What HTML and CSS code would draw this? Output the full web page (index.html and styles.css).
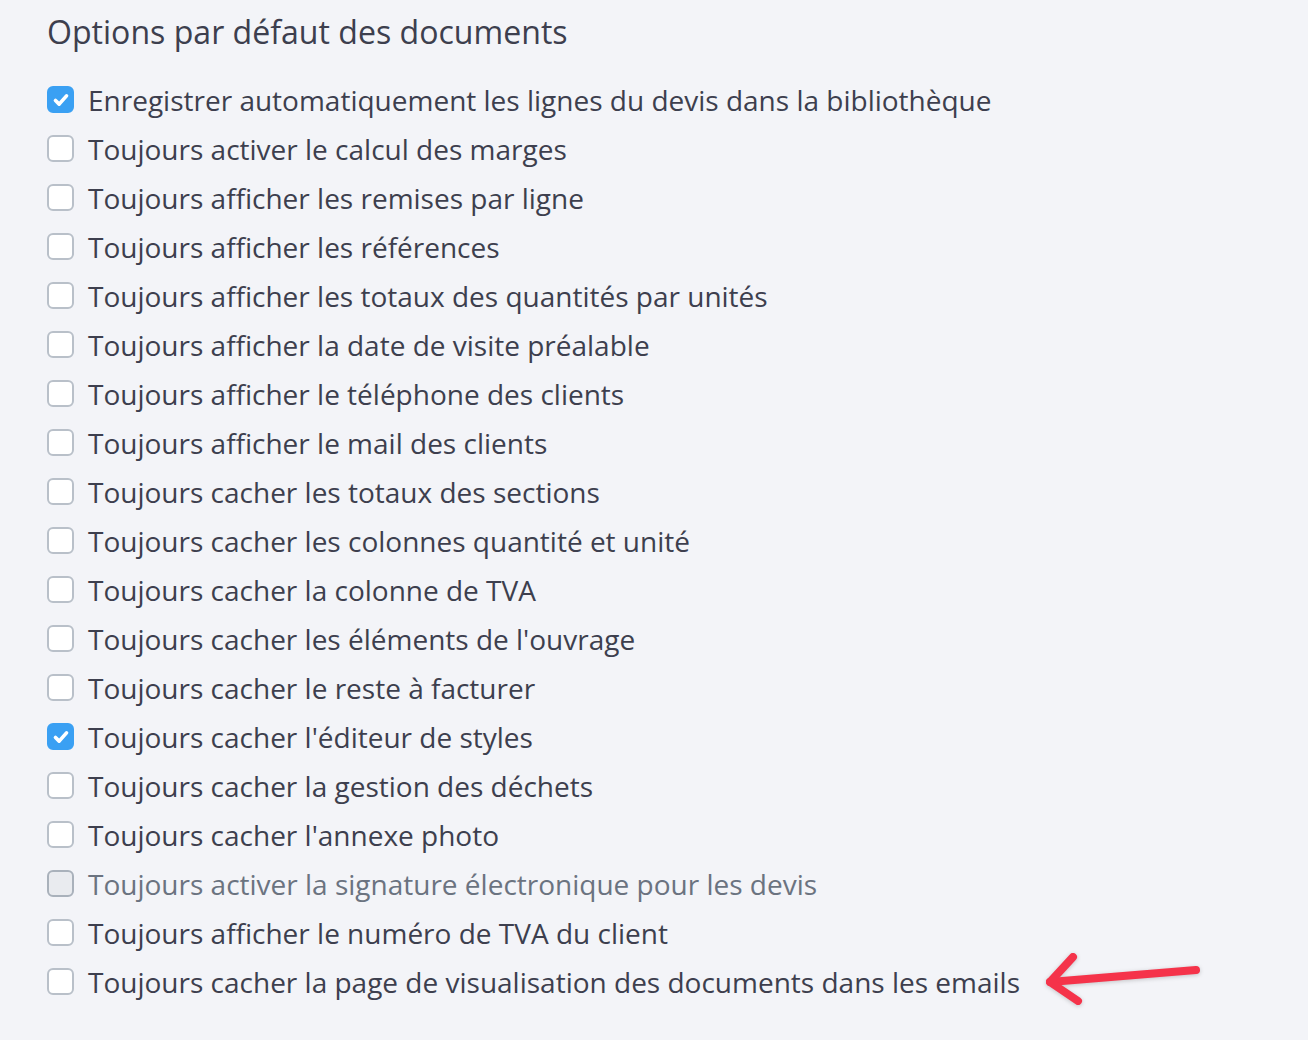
FILE: index.html
```html
<!DOCTYPE html>
<html lang="fr">
<head>
    <meta charset="UTF-8">
    <title>Options par défaut des documents</title>
    <link rel="stylesheet" href="styles.css">
</head>
<body>
    <div class="settings">
        <h2 class="settings-title">Options par défaut des documents</h2>

        <ul class="option-list">
            <li class="option"><span class="box checked"></span>Enregistrer automatiquement les lignes du devis dans la bibliothèque</li>
            <li class="option"><span class="box"></span>Toujours activer le calcul des marges</li>
            <li class="option"><span class="box"></span>Toujours afficher les remises par ligne</li>
            <li class="option"><span class="box"></span>Toujours afficher les références</li>
            <li class="option"><span class="box"></span>Toujours afficher les totaux des quantités par unités</li>
            <li class="option"><span class="box"></span>Toujours afficher la date de visite préalable</li>
            <li class="option"><span class="box"></span>Toujours afficher le téléphone des clients</li>
            <li class="option"><span class="box"></span>Toujours afficher le mail des clients</li>
            <li class="option"><span class="box"></span>Toujours cacher les totaux des sections</li>
            <li class="option"><span class="box"></span>Toujours cacher les colonnes quantité et unité</li>
            <li class="option"><span class="box"></span>Toujours cacher la colonne de TVA</li>
            <li class="option"><span class="box"></span>Toujours cacher les éléments de l'ouvrage</li>
            <li class="option"><span class="box"></span>Toujours cacher le reste à facturer</li>
            <li class="option"><span class="box checked"></span>Toujours cacher l'éditeur de styles</li>
            <li class="option"><span class="box"></span>Toujours cacher la gestion des déchets</li>
            <li class="option"><span class="box"></span>Toujours cacher l'annexe photo</li>
            <li class="option disabled"><span class="box"></span>Toujours activer la signature électronique pour les devis</li>
            <li class="option"><span class="box"></span>Toujours afficher le numéro de TVA du client</li>
            <li class="option">
                <span class="box"></span>Toujours cacher la page de visualisation des documents dans les emails
                <!-- annotation arrow -->
                <svg class="arrow" width="170" height="60" viewBox="0 0 170 60">
                    <g fill="none" stroke="#f5334a" stroke-width="8" stroke-linecap="round" stroke-linejoin="round">
                        <path d="M156 18 L10 30"/>
                        <path d="M33 5 L10 30 L38 49"/>
                    </g>
                </svg>
            </li>
        </ul>
    </div>
</body>
</html>
```

FILE: styles.css
```css
/* General Styling */
body {
    margin: 0;
    background-color: #f3f4f8;
    font-family: "Open Sans", sans-serif;
    color: #3d3f4e;
}

.settings {
    padding: 10px 47px;
}

.settings-title {
    margin: 0 0 21px;
    font-size: 32.1px;
    font-weight: 400;
    line-height: 44px;
    color: #3d3f4e;
}

/* Option list */
.option-list {
    list-style: none;
    margin: 0;
    padding: 0;
}

.option {
    position: relative;
    display: flex;
    align-items: center;
    height: 49px;
    font-size: 28px;
    white-space: nowrap;
}

.box {
    flex: none;
    width: 27px;
    height: 27px;
    margin-right: 14px;
    box-sizing: border-box;
    border: 2px solid #b9c0c9;
    border-radius: 6px;
    background-color: #fff;
}

.box.checked {
    border-color: #3aa0f3;
    background-color: #3aa0f3;
    background-image: url("data:image/svg+xml,%3Csvg xmlns='http://www.w3.org/2000/svg' viewBox='0 0 24 24'%3E%3Cpath d='M6 12.5l4 4 8-9' fill='none' stroke='white' stroke-width='4' stroke-linecap='round' stroke-linejoin='round'/%3E%3C/svg%3E");
    background-size: 22px;
    background-position: center;
    background-repeat: no-repeat;
}

.option.disabled {
    color: #6b7380;
}

.option.disabled .box {
    background-color: #e9ebef;
    border-color: #a9b1bb;
}

/* Annotation */
.arrow {
    position: absolute;
    left: 993px;
    top: -5px;
    filter: drop-shadow(0 1px 2px rgba(0, 0, 0, 0.2));
}
```
